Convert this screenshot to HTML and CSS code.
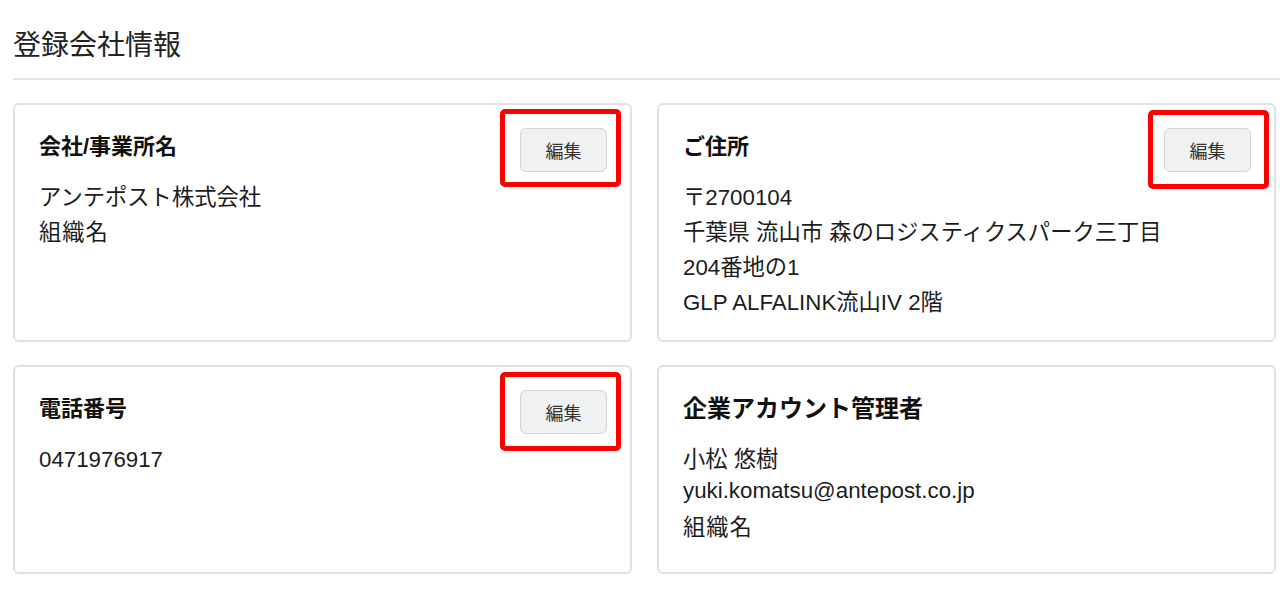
FILE: index.html
```html
<!DOCTYPE html>
<html lang="ja">
<head>
<meta charset="utf-8">
<title>登録会社情報</title>
<link rel="stylesheet" href="styles.css">
</head>
<body>
<main class="page">
  <h1 class="page-title">登録会社情報</h1>
  <hr class="divider">
  <section class="cards">
    <article class="card">
      <div class="card-head">
        <h2 class="card-title">会社/事業所名</h2>
        <div class="btn-wrap">
          <button class="btn">編集</button>
          <span class="mark"></span>
        </div>
      </div>
      <div class="card-body">
        <p class="line">アンテポスト株式会社</p>
        <p class="line org">組織名</p>
      </div>
    </article>
    <article class="card">
      <div class="card-head">
        <h2 class="card-title">ご住所</h2>
        <div class="btn-wrap">
          <button class="btn">編集</button>
          <span class="mark mark-alt"></span>
        </div>
      </div>
      <div class="card-body">
        <p class="line">〒2700104</p>
        <p class="line">千葉県 流山市 森のロジスティクスパーク三丁目</p>
        <p class="line">204番地の1</p>
        <p class="line">GLP ALFALINK流山IV 2階</p>
      </div>
    </article>
    <article class="card">
      <div class="card-head">
        <h2 class="card-title">電話番号</h2>
        <div class="btn-wrap">
          <button class="btn">編集</button>
          <span class="mark mark-low"></span>
        </div>
      </div>
      <div class="card-body">
        <p class="line">0471976917</p>
      </div>
    </article>
    <article class="card">
      <div class="card-head">
        <h2 class="card-title card-title-wide">企業アカウント管理者</h2>
      </div>
      <div class="card-body">
        <p class="line">小松 悠樹</p>
        <p class="line email">yuki.komatsu@antepost.co.jp</p>
        <p class="line org org-gap">組織名</p>
      </div>
    </article>
  </section>
</main>
</body>
</html>
```
FILE: styles.css
```css
* { box-sizing: border-box; }

html, body {
  margin: 0;
  padding: 0;
  background: #ffffff;
}

body {
  font-family: "Liberation Sans", "Noto Sans CJK JP", sans-serif;
  color: #1c1c1c;
}

.page {
  padding: 26px 0 0 13px;
}

.page-title {
  margin: 0;
  font-size: 28px;
  line-height: 40px;
  font-weight: 400;
  color: #222222;
}

.divider {
  margin: 12px 0 0 0;
  border: 0;
  height: 2px;
  background: #e2e2e2;
}

.cards {
  margin-top: 23px;
  width: 1263px;
  display: grid;
  grid-template-columns: 1fr 1fr;
  grid-template-rows: 239px 209px;
  column-gap: 25px;
  row-gap: 23px;
}

.card {
  border: 2px solid #e1e1e1;
  border-radius: 6px;
  padding: 23px 23px 23px 24px;
}

.card-head {
  display: flex;
  justify-content: space-between;
  align-items: flex-start;
  min-height: 44px;
}

.card-title {
  margin: 2px 0 0 0;
  font-size: 22px;
  line-height: 34px;
  font-weight: 700;
  color: #111111;
}

.card-title-wide {
  font-size: 24px;
  letter-spacing: 0;
}

.btn-wrap {
  position: relative;
}

.btn {
  display: block;
  width: 87px;
  height: 44px;
  padding: 0;
  font-family: "Liberation Sans", "Noto Sans CJK JP", sans-serif;
  font-size: 18px;
  color: #333333;
  background: #f0f1f1;
  border: 1px solid #d4d4d4;
  border-radius: 6px;
}

.mark {
  position: absolute;
  left: -20px;
  right: -14px;
  top: -19px;
  bottom: -15px;
  border: 5px solid #ff0000;
  border-radius: 5px;
  pointer-events: none;
}

.mark-alt {
  left: -16px;
  right: -18px;
  top: -18px;
  bottom: -17px;
}

.mark-low {
  top: -18px;
  bottom: -17px;
}

.card-body {
  margin-top: 8px;
}

.line {
  margin: 0;
  font-size: 22.3px;
  line-height: 35px;
}

.org {
  letter-spacing: 1px;
}

.email {
  line-height: 28px;
}

.org-gap {
  margin-top: 5px;
}
```
